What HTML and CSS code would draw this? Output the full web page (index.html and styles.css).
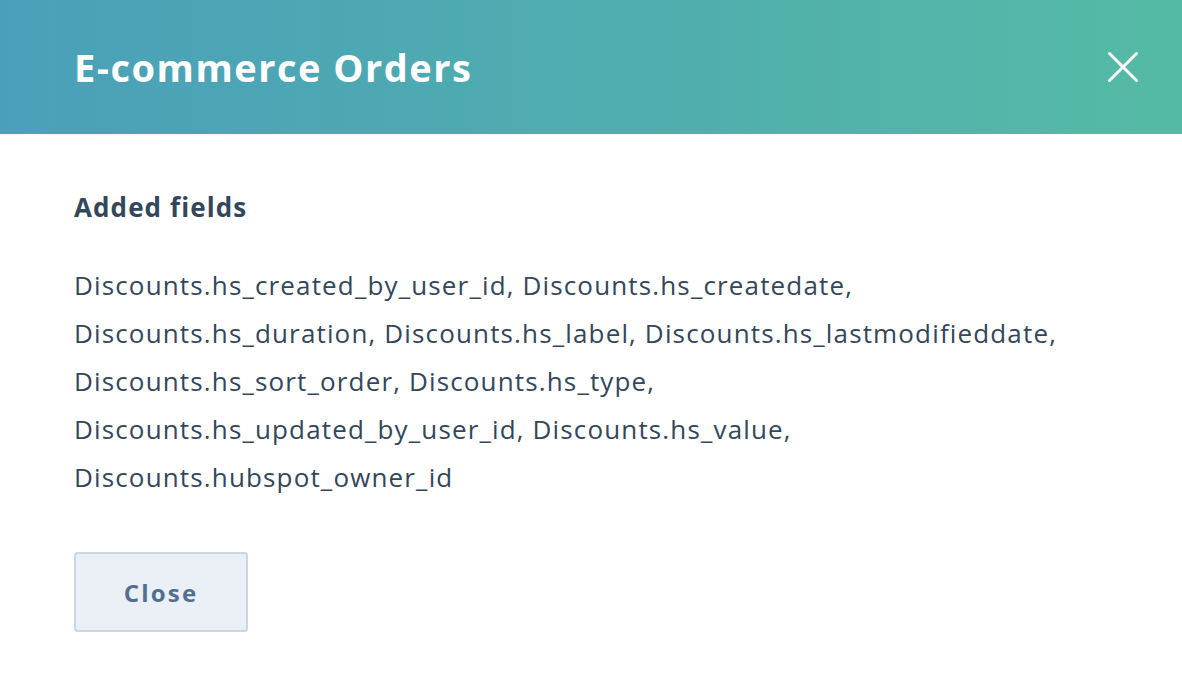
FILE: index.html
```html
<!DOCTYPE html>
<html lang="en">
<head>
    <meta charset="UTF-8">
    <meta name="viewport" content="width=device-width, initial-scale=1.0">
    <title>E-commerce Orders</title>
    <link rel="stylesheet" href="styles.css">
</head>
<body>
    <div class="modal">
        <div class="modal-header">
            <h1>E-commerce Orders</h1>
            <button class="close-icon" aria-label="Close">
                <svg width="32" height="32" viewBox="0 0 32 32">
                    <path d="M2.5 2.5 L29.5 29.5 M29.5 2.5 L2.5 29.5" stroke="#fff" stroke-width="3" stroke-linecap="round" fill="none"/>
                </svg>
            </button>
        </div>

        <div class="modal-body">
            <h2>Added fields</h2>
            <p class="fields">Discounts.hs_created_by_user_id, Discounts.hs_createdate,<br>
            Discounts.hs_duration, Discounts.hs_label, Discounts.hs_lastmodifieddate,<br>
            Discounts.hs_sort_order, Discounts.hs_type,<br>
            Discounts.hs_updated_by_user_id, Discounts.hs_value,<br>
            Discounts.hubspot_owner_id</p>
            <button class="close-btn">Close</button>
        </div>
    </div>
</body>
</html>
```

FILE: styles.css
```css
/* Global Styles */
* {
    margin: 0;
    padding: 0;
    box-sizing: border-box;
}

body {
    font-family: "Open Sans", Arial, sans-serif;
    background-color: #ffffff;
    color: #33475b;
}

/* Header */
.modal-header {
    height: 134px;
    display: flex;
    justify-content: space-between;
    align-items: center;
    padding: 0 43px 0 74px;
    background: linear-gradient(90deg, #4aa0b9 0%, #55baa5 100%);
}

.modal-header h1 {
    color: #ffffff;
    font-size: 38px;
    font-weight: 700;
    letter-spacing: 1.5px;
    line-height: 48px;
}

.close-icon {
    background: none;
    border: none;
    cursor: pointer;
    display: flex;
}

/* Body */
.modal-body {
    padding: 55px 74px;
}

.modal-body h2 {
    font-size: 26px;
    font-weight: 700;
    line-height: 36px;
    letter-spacing: 1.1px;
    margin-bottom: 36px;
}

.fields {
    font-size: 26px;
    line-height: 48px;
    letter-spacing: 1.15px;
}

.close-btn {
    margin-top: 51px;
    width: 174px;
    height: 80px;
    background-color: #eaf0f6;
    border: 2px solid #cbd6e2;
    border-radius: 4px;
    color: #516f90;
    font-family: inherit;
    font-size: 24px;
    font-weight: 700;
    letter-spacing: 2.2px;
    cursor: pointer;
}
```
